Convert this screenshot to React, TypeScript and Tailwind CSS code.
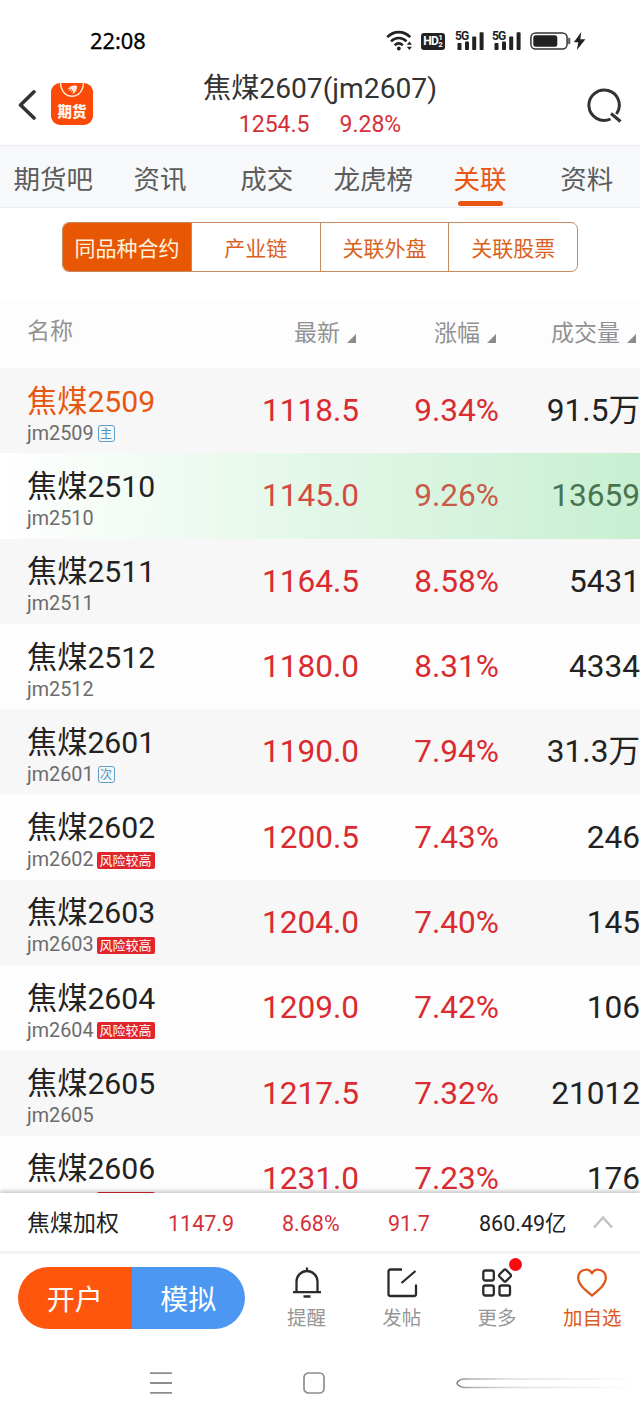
type Badge = 'main' | 'second' | 'risk'

interface Contract {
  code: string
  price: string
  change: string
  volume: string
  badge?: Badge
}

const contracts: Contract[] = [
  { code: '2509', price: '1118.5', change: '9.34%', volume: '91.5万', badge: 'main' },
  { code: '2510', price: '1145.0', change: '9.26%', volume: '13659' },
  { code: '2511', price: '1164.5', change: '8.58%', volume: '5431' },
  { code: '2512', price: '1180.0', change: '8.31%', volume: '4334' },
  { code: '2601', price: '1190.0', change: '7.94%', volume: '31.3万', badge: 'second' },
  { code: '2602', price: '1200.5', change: '7.43%', volume: '246', badge: 'risk' },
  { code: '2603', price: '1204.0', change: '7.40%', volume: '145', badge: 'risk' },
  { code: '2604', price: '1209.0', change: '7.42%', volume: '106', badge: 'risk' },
  { code: '2605', price: '1217.5', change: '7.32%', volume: '21012' },
  { code: '2606', price: '1231.0', change: '7.23%', volume: '176', badge: 'risk' }
]

const tabs = ['期货吧', '资讯', '成交', '龙虎榜', '关联', '资料']
const segments = ['同品种合约', '产业链', '关联外盘', '关联股票']

function Signal() {
  return (
    <div className="relative h-5 w-7 text-[#222]">
      <span className="absolute -left-px -top-px font-['Roboto',sans-serif] text-[12px] font-bold leading-[12px] tracking-[-0.8px]">5G</span>
      <svg className="absolute inset-0" width="28" height="20" viewBox="0 0 28 20" fill="currentColor">
        <rect x="1.5" y="12" width="4" height="7" rx="0.8" />
        <rect x="9" y="10.5" width="4" height="8.5" rx="0.8" />
        <rect x="16.2" y="5.5" width="4" height="13.5" rx="0.8" />
        <rect x="23.6" y="1.2" width="4" height="17.8" rx="0.8" />
      </svg>
    </div>
  )
}

function StatusBar() {
  return (
    <div className="flex h-[62px] items-center justify-between pl-[90px] pr-[54px] pt-[20px] text-[#222]">
      <span className="font-['Noto_Sans',sans-serif] text-[21.8px] leading-none text-black [-webkit-text-stroke:0.3px_black]">22:08</span>
      <div className="flex items-center">
        <svg width="28" height="22" viewBox="0 0 28 22" fill="none" stroke="currentColor" strokeWidth="2.6">
          <path d="M1.2 7.2C8 .4 17.5 .4 24.3 7.2" />
          <path d="M5 11.3C9.5 6.8 16 6.8 20.5 11.3" />
          <path d="M8.7 15.2C11.2 12.9 14.3 12.9 16.8 15.2" />
          <circle cx="12.8" cy="18.5" r="1.9" fill="currentColor" stroke="none" />
          <path d="M20.8 14.8 23.4 11.5 26 14.8ZM20.8 16.8 23.4 20 26 16.8Z" fill="currentColor" stroke="none" />
        </svg>
        <div className="ml-[7px] flex h-[17px] w-6 items-center justify-center rounded-[3px] bg-[#222] font-['Roboto',sans-serif] text-white">
          <span className="text-[12px] font-bold leading-none tracking-[-0.7px]">HD</span>
          <span className="flex flex-col text-[8px] font-bold leading-[7px]">
            <span>1</span>
            <span>2</span>
          </span>
        </div>
        <div className="ml-[11px]"><Signal /></div>
        <div className="ml-[9px]"><Signal /></div>
        <svg className="ml-[9px]" width="41" height="20" viewBox="0 0 41 20" fill="none">
          <rect x="0.9" y="1.9" width="36.2" height="16.2" rx="4.8" stroke="#333" strokeWidth="1.5" />
          <rect x="3.3" y="4.3" width="24" height="11.4" rx="2.5" fill="#222" />
          <path d="M38.5 7v6h.6c.6 0 .9-.4.9-1V8c0-.6-.3-1-.9-1Z" fill="#555" stroke="#555" strokeWidth="0.6" />
        </svg>
        <svg className="ml-[2px]" width="13" height="20" viewBox="0 0 13 20" fill="currentColor">
          <path d="M8.3 1 .8 11.2H5.3L3.9 19 12.4 8.2H7.3Z" />
        </svg>
      </div>
    </div>
  )
}

function Header() {
  return (
    <header className="flex h-[84px] items-start justify-between border-b border-[#e9ebee] pl-[17px] pr-[17px]">
      <div className="flex w-[120px] items-center pt-[21px]">
        <svg width="20" height="32" viewBox="0 0 20 32" fill="none" stroke="#333" strokeWidth="3.6" strokeLinecap="round" strokeLinejoin="round">
          <path d="M17 3.8 3.5 17 17 30" />
        </svg>
        <div className="relative ml-[14px] flex h-[42px] w-[42px] items-end justify-center overflow-hidden rounded-[9px] bg-[#fb4a08]">
          <svg className="absolute inset-0" width="42" height="42" viewBox="0 0 42 42" fill="none" stroke="#ffe9dc">
            <path d="M9.5-1C9.5 18 32.5 18 32.5-1" strokeWidth="1.4" />
            <path d="M16.5 6.5C18 3.5 22 1.5 26 3C26.3 6.5 24.5 10 21.5 11L22.5 7 20 9.5 21 5.5 17.5 8.5 19 5.5Z" fill="#ffe9dc" stroke="none" />
          </svg>
          <span className="pb-[5px] text-[14.5px] font-black leading-[15px] text-[#fff3ea]">期货</span>
        </div>
      </div>
      <div className="flex flex-col items-center pt-[9px]">
        <h1 className="text-[28.2px] leading-9 text-[#333]">焦煤2607(jm2607)</h1>
        <div className="mt-px flex gap-[30px] text-[23px] leading-[34px] text-[#d5303a]">
          <span>1254.5</span>
          <span>9.28%</span>
        </div>
      </div>
      <div className="flex w-[120px] justify-end pt-[24px]">
        <svg width="38" height="38" viewBox="0 0 38 38" fill="none" stroke="#333" strokeWidth="3">
          <path d="M25.5 33A15.2 15.2 0 1 1 31.5 28" />
          <path d="M26 27.5 35.5 35.5" />
        </svg>
      </div>
    </header>
  )
}

function ContractBadge({ type }: { type: Badge }) {
  if (type === 'risk') {
    return (
      <span className="ml-[3px] flex h-[17px] w-[58px] items-center justify-center rounded-[2px] bg-[#e0262c] text-[13px] leading-none text-white">
        风险较高
      </span>
    )
  }
  return (
    <span className="ml-[4px] flex h-[17px] w-[17px] items-center justify-center rounded-[3px] border border-[#5b9cc9] text-[12px] leading-none text-[#4a92c4]">
      {type === 'main' ? '主' : '次'}
    </span>
  )
}

function rowStyle(index: number) {
  if (index === 1) return 'bg-linear-to-r from-white via-[#e2f7e8] to-[#c8efd1]'
  return index % 2 === 0 ? 'bg-[#f7f7f7]' : 'bg-[#fdfdfd]'
}

function SortArrow() {
  return (
    <svg className="ml-[7px] mt-[9px]" width="9" height="9" viewBox="0 0 9 9" fill="#8b8b8b">
      <path d="M9 0V9H0Z" />
    </svg>
  )
}

function ContractTable() {
  return (
    <section className="h-[893px] overflow-hidden">
      <div className="grid h-[68px] grid-cols-[1fr_140px_140px_140px] items-center bg-[#fdfdfd] pl-[27px] text-[23px] leading-8 text-[#929292]">
        <span className="pb-[4px]">名称</span>
        {['最新', '涨幅', '成交量'].map((label) => (
          <span key={label} className="flex items-center justify-end whitespace-nowrap pr-1">
            {label}
            <SortArrow />
          </span>
        ))}
      </div>
      {contracts.map((item, index) => (
        <div
          key={item.code}
          className={`grid h-[85.3px] grid-cols-[1fr_140px_140px_140px] items-center pl-[27px] text-right text-[31.6px] leading-8 ${rowStyle(index)}`}
        >
          <div className="pt-[8px] text-left">
            <div className={`text-[30.2px] leading-[38px] ${index === 0 ? 'text-[#e9560f]' : 'text-[#222]'}`}>焦煤{item.code}</div>
            {/* the last row slides under the index bar, only the top of its badge shows */}
            {index === contracts.length - 1 ? (
              <div className="flex h-[26px] items-start pl-[70px] pt-[4px]">
                <span className="h-[17px] w-[58px] rounded-[2px] bg-[#e0262c]" />
              </div>
            ) : (
              <div className="flex items-center text-[19.8px] leading-[26px] text-[#6c6c6c]">
                jm{item.code}
                {item.badge && <ContractBadge type={item.badge} />}
              </div>
            )}
          </div>
          <span className={`pr-px pt-px ${index === 1 ? 'text-[#d34b40]' : 'text-[#d92b30]'}`}>{item.price}</span>
          <span className={`pr-px pt-px ${index === 1 ? 'text-[#ca5a48]' : 'text-[#d92b30]'}`}>{item.change}</span>
          <span className={`pt-px ${index === 1 ? 'text-[#47734f]' : 'text-[#222]'}`}>{item.volume}</span>
        </div>
      ))}
    </section>
  )
}

function IndexBar() {
  return (
    <div className="relative flex h-[60px] items-center border-b-2 border-[#f1f1f1] bg-white pl-[27px] pt-[3px] text-[21.5px] leading-8 text-[#d5303a] shadow-[0_-2px_4px_rgba(0,0,0,0.22)]">
      <span className="w-[141px] text-[23px] text-[#222]">焦煤加权</span>
      <span className="w-[114px]">1147.9</span>
      <span className="w-[106px]">8.68%</span>
      <span className="w-[91px]">91.7</span>
      <span className="w-[113px] text-[#222]">860.49亿</span>
      <svg className="-mt-[3px]" width="22" height="14" viewBox="0 0 22 14" fill="none" stroke="#c2c2c2" strokeWidth="2.5">
        <path d="M2 12.5 11 2.5 20 12.5" />
      </svg>
    </div>
  )
}

function BottomBar() {
  return (
    <div className="flex h-[91px] items-start pl-[18px] pt-[14px]">
      <div className="flex h-[62px] w-[227px] overflow-hidden rounded-full text-[28px] text-white">
        <button className="w-1/2 bg-[#ff560d] pt-[6px]">开户</button>
        <button className="w-1/2 bg-[#4b97f2] pt-[6px]">模拟</button>
      </div>
      <div className="ml-[14px] grid flex-1 grid-cols-4 text-[19.5px] leading-7 text-[#969696]">
        <div className="flex flex-col items-center">
          <svg width="32" height="34" viewBox="0 0 32 34" fill="none" stroke="#2b2b2b" strokeWidth="2.3">
            <path d="M16 .5V4M5.5 25.2V14.5a10.5 10.5 0 0 1 21 0V25.2M2 25.2H30M12.5 29.5H19.5" />
          </svg>
          <span className="mt-[4px]">提醒</span>
        </div>
        <div className="flex flex-col items-center">
          <svg width="32" height="34" viewBox="0 0 32 34" fill="none" stroke="#2b2b2b" strokeWidth="2.3">
            <path d="M16 2.5H4.5Q2.5 2.5 2.5 4.5V27Q2.5 29 4.5 29H28Q30 29 30 27V17.5M15.5 16 29.5 4" />
          </svg>
          <span className="mt-[4px]">发帖</span>
        </div>
        <div className="relative flex flex-col items-center">
          <svg width="32" height="34" viewBox="0 0 32 34" fill="none" stroke="#2b2b2b" strokeWidth="2.3">
            <rect x="2.3" y="3.5" width="10.5" height="10" rx="2" />
            <rect x="2.3" y="18.5" width="10.5" height="10" rx="2" />
            <rect x="18.5" y="18.5" width="10.5" height="10" rx="2" />
            <path d="M23 2.9 18.6 7.3Q17.5 8.5 18.6 9.7L23 14.1Q24 15.1 25 14.1L29.4 9.7Q30.5 8.5 29.4 7.3L25 2.9Q24 1.9 23 2.9Z" />
          </svg>
          <span className="absolute -top-[9px] left-[59px] h-[13px] w-[13px] rounded-full bg-[#fa0b12]" />
          <span className="mt-[4px]">更多</span>
        </div>
        <div className="flex flex-col items-center text-[#dc5a1b]">
          <svg width="32" height="34" viewBox="0 0 32 34" fill="none" stroke="currentColor" strokeWidth="2.3" strokeLinejoin="round">
            <path d="M16 28.5C9.5 23 2.2 17.5 2.2 11C2.2 2.6 12.5 -.3 16 6.2C19.5 -.3 29.8 2.6 29.8 11C29.8 17.5 22.5 23 16 28.5Z" />
          </svg>
          <span className="mt-[4px]">加自选</span>
        </div>
      </div>
    </div>
  )
}

function SystemNav() {
  return (
    <nav className="flex h-[78px] items-center pl-[150px]">
      <svg width="22" height="24" viewBox="0 0 22 24" stroke="#8d8d8d" strokeWidth="1.8">
        <path d="M0 2.2H22M0 12H22M0 21.8H22" />
      </svg>
      <svg className="ml-[131px]" width="22" height="22" viewBox="0 0 22 22" fill="none" stroke="#8d8d8d" strokeWidth="1.7">
        <rect x="1" y="1" width="20" height="20" rx="4.5" />
      </svg>
      <svg className="ml-[131px]" width="184" height="16" viewBox="0 0 184 16" fill="none">
        <defs>
          <linearGradient id="fade" x1="0" y1="0" x2="184" y2="0" gradientUnits="userSpaceOnUse">
            <stop stopColor="#777" />
            <stop offset="0.06" stopColor="#aaa" />
            <stop offset="0.3" stopColor="#ddd" />
            <stop offset="1" stopColor="#fff" />
          </linearGradient>
        </defs>
        <path d="M184 4H8C5 4 1 6.5 1 8.2S5 12.5 8 12.5H184" stroke="url(#fade)" strokeWidth="1.5" />
      </svg>
    </nav>
  )
}

export default function App() {
  return (
    <main className="h-[1422px] w-[640px] overflow-hidden bg-white font-['Roboto','Noto_Sans_CJK_SC',sans-serif]">
      <StatusBar />
      <Header />
      <div className="grid h-[62px] grid-cols-6 border-b border-[#e9edf1] bg-[#f6f8fa] text-[26.5px] leading-[67px] text-[#5c5c5c]">
        {tabs.map((tab) => (
          <div key={tab} className={`relative h-[61px] text-center ${tab === '关联' ? 'text-[#ea5514]' : ''}`}>
            {tab}
            {tab === '关联' && <span className="absolute bottom-px left-[31px] h-[5px] w-[45px] rounded-full bg-[#ea5514]" />}
          </div>
        ))}
      </div>
      <div className="h-[92px] px-[62px] pt-[14px]">
        <div className="flex h-[50px] overflow-hidden rounded-[7px] border border-[#c58a60] text-center text-[21px] leading-[52px] text-[#d9621f]">
          {segments.map((segment, index) => (
            <div key={segment} className={index === 0 ? 'w-[128px] bg-[#e85804] text-[#fff3df]' : 'flex-1 border-l border-[#c58a60]'}>
              {segment}
            </div>
          ))}
        </div>
      </div>
      <ContractTable />
      <IndexBar />
      <BottomBar />
      <SystemNav />
    </main>
  )
}
